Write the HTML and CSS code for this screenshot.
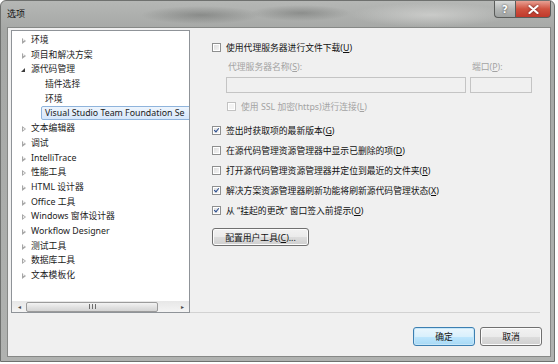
FILE: index.html
```html
<!DOCTYPE html>
<html lang="zh-CN">
<head>
    <meta charset="UTF-8">
    <title>选项</title>
    <link rel="stylesheet" href="styles.css">
</head>
<body>
    <div class="window">
        <div class="titlebar">
            <span class="title">选项</span>
            <div class="caption">
                <span class="cap-btn help">?</span>
                <span class="cap-btn close">
                    <svg width="11" height="9" viewBox="0 0 11 9"><path d="M1.5 1 L9.5 8 M9.5 1 L1.5 8" stroke="#fff" stroke-width="2.2" stroke-linecap="round"/></svg>
                </span>
            </div>
        </div>

        <div class="client">
            <div class="main">
                <!-- left tree -->
                <div class="tree">
                    <ul class="tree-list">
                        <li><span class="arrow"></span>环境</li>
                        <li><span class="arrow"></span>项目和解决方案</li>
                        <li><span class="arrow open"></span>源代码管理</li>
                        <li class="child">插件选择</li>
                        <li class="child">环境</li>
                        <li class="child"><span class="selected">Visual Studio Team Foundation Se</span></li>
                        <li><span class="arrow"></span>文本编辑器</li>
                        <li><span class="arrow"></span>调试</li>
                        <li><span class="arrow"></span>IntelliTrace</li>
                        <li><span class="arrow"></span>性能工具</li>
                        <li><span class="arrow"></span>HTML 设计器</li>
                        <li><span class="arrow"></span>Office 工具</li>
                        <li><span class="arrow"></span>Windows 窗体设计器</li>
                        <li><span class="arrow"></span>Workflow Designer</li>
                        <li><span class="arrow"></span>测试工具</li>
                        <li><span class="arrow"></span>数据库工具</li>
                        <li><span class="arrow"></span>文本模板化</li>
                    </ul>
                    <div class="hscroll">
                        <span class="sb-arrow">&#9666;</span>
                        <span class="sb-thumb">
                            <svg width="7" height="5" viewBox="0 0 7 5"><path d="M0.5 0 V5 M3.5 0 V5 M6.5 0 V5" stroke="#6d6d6d" stroke-width="1"/></svg>
                        </span>
                        <span class="sb-track"></span>
                        <span class="sb-arrow">&#9656;</span>
                    </div>
                </div>

                <!-- right options -->
                <div class="options">
                    <label class="opt first"><span class="check"></span><span>使用代理服务器进行文件下载(<u>U</u>)</span></label>

                    <div class="proxy">
                        <span class="field-label">代理服务器名称(<u>S</u>):</span>
                        <span class="field-label">端口(<u>P</u>):</span>
                        <span class="textbox"></span>
                        <span class="textbox"></span>
                    </div>

                    <label class="opt ssl disabled"><span class="check"></span><span>使用 SSL 加密(https)进行连接(<u>L</u>)</span></label>

                    <label class="opt group"><span class="check on"></span><span>签出时获取项的最新版本(<u>G</u>)</span></label>
                    <label class="opt"><span class="check"></span><span>在源代码管理资源管理器中显示已删除的项(<u>D</u>)</span></label>
                    <label class="opt"><span class="check"></span><span>打开源代码管理资源管理器并定位到最近的文件夹(<u>R</u>)</span></label>
                    <label class="opt"><span class="check on"></span><span>解决方案资源管理器刷新功能将刷新源代码管理状态(<u>X</u>)</span></label>
                    <label class="opt"><span class="check on"></span><span>从 “挂起的更改” 窗口签入前提示(<u>O</u>)</span></label>

                    <button class="btn tools">配置用户工具(<u>C</u>)...</button>
                </div>
            </div>

            <div class="footer">
                <button class="btn default">确定</button>
                <button class="btn">取消</button>
            </div>
        </div>
    </div>
</body>
</html>
```

FILE: styles.css
```css
* {
    box-sizing: border-box;
}
body {
    margin: 0;
    background-color: #fff;
    font-family: "Noto Sans", "Noto Sans CJK SC", sans-serif;
    font-size: 8.8px;
    color: #1b1b1b;
}
.window {
    width: 555px;
    height: 362px;
    padding: 0 3px 4px 6px;
    border: 1px solid #6f716f;
    border-radius: 6px 6px 0 0;
    background:
        radial-gradient(ellipse 60px 9px at 200px 14px, rgba(70,72,70,0.35), transparent),
        radial-gradient(ellipse 50px 8px at 300px 12px, rgba(60,62,60,0.3), transparent),
        radial-gradient(ellipse 80px 12px at 430px 14px, rgba(230,230,228,0.5), transparent),
        linear-gradient(#b5b7b5, #a5a7a5 30px, #b0b2b0);
    display: flex;
    flex-direction: column;
}
.titlebar {
    height: 26px;
    display: flex;
    justify-content: space-between;
    align-items: flex-start;
}
.title {
    margin-top: 6px;
    color: #111;
    font-size: 9px;
}
.caption {
    display: flex;
}
.cap-btn {
    height: 17px;
    display: flex;
    align-items: center;
    justify-content: center;
    border: 1px solid #5a5c5a;
    border-top: none;
}
.help {
    width: 21px;
    border-radius: 0 0 0 4px;
    border-right: none;
    background: linear-gradient(#d8dad9, #b4b7b6 50%, #9fa2a1);
    color: #fff;
    font-family: "DejaVu Sans", sans-serif;
    font-size: 10px;
    font-weight: bold;
    text-shadow: 0 0 2px #333;
}
.close {
    width: 36px;
    border-radius: 0 0 4px 0;
    background: linear-gradient(#e8a093, #d0523f 50%, #c0392b);
}
.close svg {
    filter: drop-shadow(0 0 1px #602020);
}
.client {
    flex: 1;
    border: 1px solid #868886;
    background-color: #f0f0f0;
    padding: 2px 8px 0 3px;
    display: flex;
    flex-direction: column;
}
.main {
    display: flex;
    height: 283px;
}

/* tree */
.tree {
    width: 179px;
    border: 1px solid #8f9398;
    background-color: #fff;
    display: flex;
    flex-direction: column;
    overflow: hidden;
}
.tree-list {
    flex: 1;
    list-style: none;
    margin: 0;
    padding: 2px 0 0 0;
}
.tree-list li {
    height: 14.7px;
    line-height: 14.7px;
    padding-left: 19px;
    white-space: nowrap;
    position: relative;
}
.tree-list li.child {
    padding-left: 33px;
}
.arrow {
    position: absolute;
    left: 10px;
    top: 5px;
    width: 0;
    height: 0;
    border-top: 3px solid transparent;
    border-bottom: 3px solid transparent;
    border-left: 4px solid #a6a6a6;
}
.arrow::after {
    content: "";
    position: absolute;
    left: -3px;
    top: -1.6px;
    border-top: 1.6px solid transparent;
    border-bottom: 1.6px solid transparent;
    border-left: 2px solid #fff;
}
.arrow.open {
    left: 9px;
    top: 6px;
    border: none;
    border-right: 4px solid #3c3c3c;
    border-top: 4px solid transparent;
}
.arrow.open::after {
    display: none;
}
.selected {
    display: inline-block;
    margin-left: -4px;
    padding: 0 30px 0 3px;
    height: 14px;
    line-height: 12px;
    border: 1px solid #8fb4dc;
    border-radius: 2px;
    background: linear-gradient(#eef5fd, #d6e7fb);
}
.hscroll {
    height: 11px;
    display: flex;
    align-items: center;
    background: linear-gradient(#e7e7e7, #f4f4f4);
    font-size: 6px;
    color: #4a4a4a;
}
.sb-arrow {
    width: 14px;
    text-align: center;
}
.sb-thumb {
    width: 132px;
    height: 10px;
    border: 1px solid #9b9b9b;
    border-radius: 2px;
    background: linear-gradient(#f3f3f3, #e2e2e2 50%, #d4d4d4);
    display: flex;
    align-items: center;
    justify-content: center;
}
.sb-track {
    flex: 1;
}

/* options */
.options {
    width: 350px;
    padding: 10px 0 0 22px;
    border-bottom: 1px solid #d2d2d2;
    display: flex;
    flex-direction: column;
    align-items: flex-start;
}
.opt {
    height: 14px;
    display: flex;
    align-items: center;
    gap: 5px;
    margin-top: 6px;
    color: #111;
}
.opt.first {
    margin-top: 0;
}
.opt.group {
    margin-top: 10px;
}
.opt.ssl {
    margin-left: 15px;
    margin-top: 6px;
}
.disabled,
.field-label {
    color: #a3a3a3;
}
.check {
    width: 9px;
    height: 9px;
    flex: none;
    border: 1px solid #8e8f8f;
    background: linear-gradient(135deg, #dcdcdc, #f6f6f6);
    box-shadow: inset 0 0 0 1px #fff;
    position: relative;
}
.disabled .check {
    border-color: #c2c2c2;
    background: #f4f4f4;
}
.check.on::after {
    content: "";
    position: absolute;
    left: 2px;
    top: 0;
    width: 2px;
    height: 4px;
    border-right: 1.5px solid #2a4d8f;
    border-bottom: 1.5px solid #2a4d8f;
    transform: rotate(40deg);
}
.proxy {
    margin: 6px 0 0 14px;
    display: grid;
    grid-template-columns: 240px 62px;
    column-gap: 4px;
    row-gap: 3px;
}
.field-label {
    height: 14px;
    line-height: 14px;
    padding-left: 2px;
}
.textbox {
    height: 16px;
    border: 1px solid #c4c4c4;
    background-color: #f0f0f0;
}
.btn {
    font-family: inherit;
    font-size: 8.8px;
    color: #111;
    height: 19px;
    padding: 0;
    border: 1px solid #707070;
    border-radius: 3px;
    background: linear-gradient(#f2f2f2, #ebebeb 50%, #dddddd 51%, #cfcfcf);
    box-shadow: inset 0 0 0 1px #fcfcfc;
}
.btn.tools {
    width: 97px;
    height: 18px;
    margin-top: 11px;
}
.footer {
    display: flex;
    justify-content: flex-end;
    gap: 5px;
    margin-top: 14px;
}
.footer .btn {
    width: 62px;
}
.btn.default {
    border-color: #3c7fb1;
    background: linear-gradient(#eaf6fd, #d9f0fc 50%, #bee6fd 51%, #a7d9f5);
    box-shadow: inset 0 0 0 1px #c6e6f8;
}
```
